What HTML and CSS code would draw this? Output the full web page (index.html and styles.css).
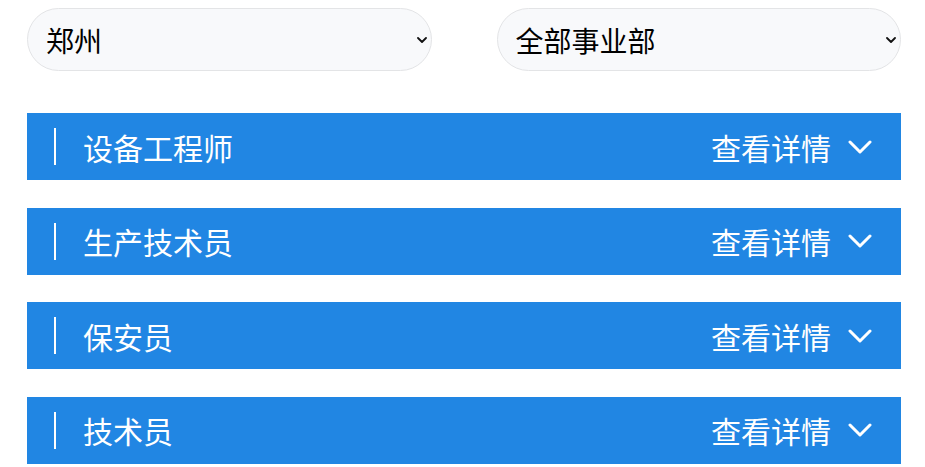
FILE: index.html
```html
<!DOCTYPE html>
<html lang="zh-CN">
<head>
<meta charset="utf-8">
<title>职位列表</title>
<link rel="stylesheet" href="styles.css">
</head>
<body>
<div class="page">
  <div class="filters">
    <div class="select-wrap">
      <select class="select">
        <option>郑州</option>
      </select>
      <svg class="caret" viewBox="0 0 10 6" width="10" height="6"><path d="M1 1 L5 5 L9 1" fill="none" stroke="#111" stroke-width="1.8" stroke-linecap="round" stroke-linejoin="round"/></svg>
    </div>
    <div class="select-wrap">
      <select class="select">
        <option>全部事业部</option>
      </select>
      <svg class="caret" viewBox="0 0 10 6" width="10" height="6"><path d="M1 1 L5 5 L9 1" fill="none" stroke="#111" stroke-width="1.8" stroke-linecap="round" stroke-linejoin="round"/></svg>
    </div>
  </div>
  <div class="jobs">
    <div class="job">
      <span class="bar"></span>
      <span class="title">设备工程师</span>
      <span class="more">查看详情</span>
      <svg class="chev" viewBox="0 0 24 14" width="24" height="14"><path d="M2 2 L12 12 L22 2" fill="none" stroke="#fff" stroke-width="3" stroke-linecap="round" stroke-linejoin="round"/></svg>
    </div>
    <div class="job">
      <span class="bar"></span>
      <span class="title">生产技术员</span>
      <span class="more">查看详情</span>
      <svg class="chev" viewBox="0 0 24 14" width="24" height="14"><path d="M2 2 L12 12 L22 2" fill="none" stroke="#fff" stroke-width="3" stroke-linecap="round" stroke-linejoin="round"/></svg>
    </div>
    <div class="job">
      <span class="bar"></span>
      <span class="title">保安员</span>
      <span class="more">查看详情</span>
      <svg class="chev" viewBox="0 0 24 14" width="24" height="14"><path d="M2 2 L12 12 L22 2" fill="none" stroke="#fff" stroke-width="3" stroke-linecap="round" stroke-linejoin="round"/></svg>
    </div>
    <div class="job">
      <span class="bar"></span>
      <span class="title">技术员</span>
      <span class="more">查看详情</span>
      <svg class="chev" viewBox="0 0 24 14" width="24" height="14"><path d="M2 2 L12 12 L22 2" fill="none" stroke="#fff" stroke-width="3" stroke-linecap="round" stroke-linejoin="round"/></svg>
    </div>
  </div>
</div>
</body>
</html>
```
FILE: styles.css
```css
html, body {
  margin: 0;
  padding: 0;
  background: #fff;
}
body {
  font-family: "Noto Sans CJK SC", "Noto Sans", sans-serif;
}
.page {
  padding: 8px 24px 0 27px;
}
.filters {
  display: grid;
  grid-template-columns: 1fr 1fr;
  column-gap: 65px;
}
.select-wrap {
  position: relative;
}
.select {
  appearance: none;
  -webkit-appearance: none;
  display: block;
  width: 100%;
  height: 63px;
  box-sizing: border-box;
  border: 1px solid #e3e4e6;
  border-radius: 32px;
  background: #f8f9fb;
  padding: 0 40px 0 18px;
  font-family: "Noto Sans CJK SC", sans-serif;
  font-size: 28px;
  color: #000;
  outline: none;
}
.caret {
  position: absolute;
  right: 5px;
  top: 29px;
  width: 10px;
  height: 6px;
  pointer-events: none;
}
.jobs {
  margin-top: 42px;
  display: flex;
  flex-direction: column;
  gap: 27.67px;
}
.job {
  height: 67px;
  background: #2186e3;
  display: flex;
  align-items: center;
  padding: 0 29px 0 27px;
  color: #fff;
  font-size: 30px;
}
.bar {
  width: 2px;
  height: 37px;
  background: #fff;
  margin-right: 27px;
}
.title {
  flex: 1;
  line-height: 1;
}
.more {
  line-height: 1;
  margin-right: 17px;
}
.chev {
  display: block;
}
```
